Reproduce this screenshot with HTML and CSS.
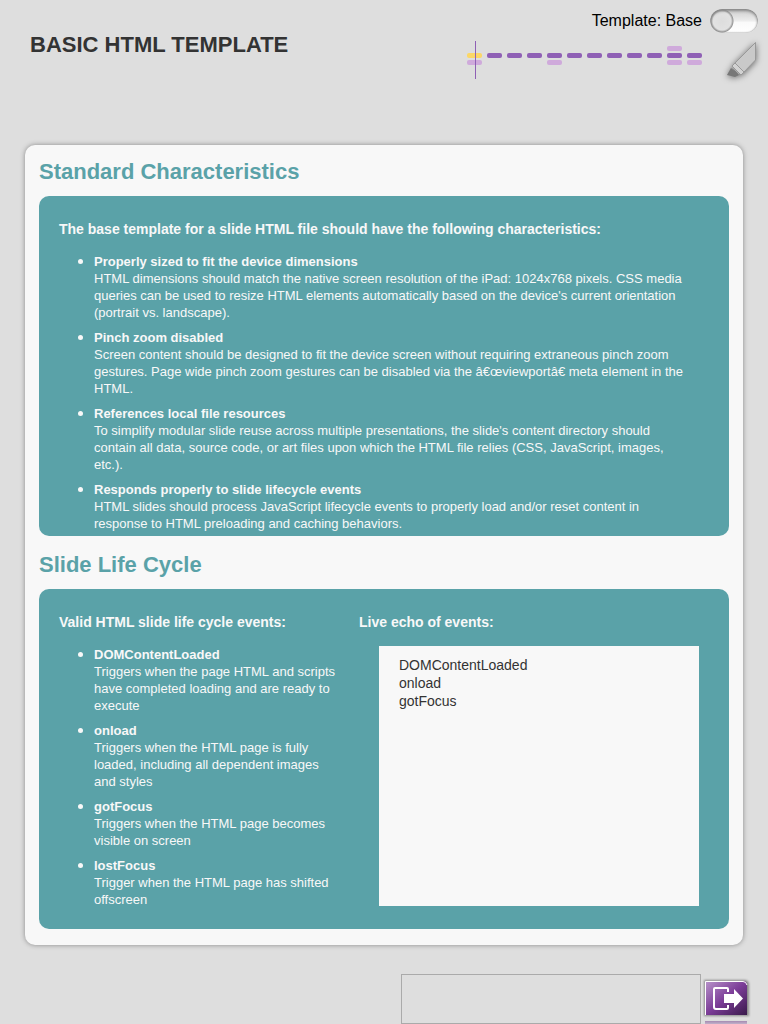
FILE: index.html
```html
<!DOCTYPE html>
<html lang="en">
<head>
<meta charset="utf-8">
<meta name="viewport" content="width=device-width, initial-scale=1">
<title>Basic HTML Template</title>
<link rel="stylesheet" href="styles.css">
</head>
<body>
<header class="header">
  <h1 class="title">BASIC HTML TEMPLATE</h1>
  <div class="tools">
    <div class="mode">
      <label for="mode">Template: Base</label>
      <input class="switch" type="checkbox" id="mode">
    </div>
    <div class="nav">
      <svg class="map" width="235" height="38" viewBox="0 0 235 38" role="img" aria-label="Slide map">
        <path stroke="#8f60b5" d="M8.500 0V38"/>
        <g fill="#8f60b5">
          <rect x="20" y="12" width="15" height="5" rx="2"/><rect x="40" y="12" width="15" height="5" rx="2"/>
          <rect x="60" y="12" width="15" height="5" rx="2"/><rect x="80" y="12" width="15" height="5" rx="2"/>
          <rect x="100" y="12" width="15" height="5" rx="2"/><rect x="120" y="12" width="15" height="5" rx="2"/>
          <rect x="140" y="12" width="15" height="5" rx="2"/><rect x="160" y="12" width="15" height="5" rx="2"/>
          <rect x="180" y="12" width="15" height="5" rx="2"/><rect x="200" y="12" width="15" height="5" rx="2"/>
          <rect x="220" y="12" width="15" height="5" rx="2"/>
        </g>
        <g fill="#cfaadb">
          <rect x="0" y="19" width="15" height="5" rx="2"/><rect x="80" y="19" width="15" height="5" rx="2"/>
          <rect x="200" y="5" width="15" height="5" rx="2"/><rect x="200" y="19" width="15" height="5" rx="2"/>
          <rect x="220" y="19" width="15" height="5" rx="2"/>
        </g>
        <rect x="0" y="12" width="15" height="5" rx="2" fill="#fcd766"/>
        <path stroke="#8f60b5" d="M8.500 11V25"/>
      </svg>
      <button class="pen" type="button" aria-label="Highlighter">
        <svg width="32" height="38" viewBox="0 0 32 38">
          <path d="M29.500 1.500V19L18 31L9 22Z" fill="#c9c9c9" stroke="#999"/>
          <path d="M9 22L18 31L15 34L6 25Z" fill="#d2d2d2" stroke="#999"/>
          <path d="M5 27L13 34L9 36L1 34Z" fill="#777"/>
          <path d="M6 26L13 33" stroke="#aaa"/>
        </svg>
      </button>
    </div>
  </div>
</header>

<main class="card">
  <h2 class="heading">Standard Characteristics</h2>
  <section class="panel">
    <div class="column">
      <h3 class="lead">The base template for a slide HTML file should have the following characteristics:</h3>
      <ul class="list">
        <li><strong>Properly sized to fit the device dimensions</strong><p>HTML dimensions should match the native screen resolution of the iPad: 1024x768 pixels. CSS media queries can be used to resize HTML elements automatically based on the device's current orientation (portrait vs. landscape).</p></li>
        <li><strong>Pinch zoom disabled</strong><p>Screen content should be designed to fit the device screen without requiring extraneous pinch zoom gestures. Page wide pinch zoom gestures can be disabled via the â€œviewportâ€ meta element in the HTML.</p></li>
        <li><strong>References local file resources</strong><p>To simplify modular slide reuse across multiple presentations, the slide's content directory should contain all data, source code, or art files upon which the HTML file relies (CSS, JavaScript, images, etc.).</p></li>
        <li><strong>Responds properly to slide lifecycle events</strong><p>HTML slides should process JavaScript lifecycle events to properly load and/or reset content in response to HTML preloading and caching behaviors.</p></li>
      </ul>
    </div>
  </section>
  <h2 class="heading">Slide Life Cycle</h2>
  <section class="panel split">
    <div class="column events">
      <h3 class="lead">Valid HTML slide life cycle events:</h3>
      <ul class="list">
        <li><strong>DOMContentLoaded</strong><p>Triggers when the page HTML and scripts have completed loading and are ready to execute</p></li>
        <li><strong>onload</strong><p>Triggers when the HTML page is fully loaded, including all dependent images and styles</p></li>
        <li><strong>gotFocus</strong><p>Triggers when the HTML page becomes visible on screen</p></li>
        <li><strong>lostFocus</strong><p>Trigger when the HTML page has shifted offscreen</p></li>
      </ul>
    </div>
    <div class="column echo">
      <h3 class="lead">Live echo of events:</h3>
      <div class="log"><p>DOMContentLoaded</p><p>onload</p><p>gotFocus</p></div>
    </div>
  </section>
</main>

<footer class="footer">
  <div class="tray"></div>
  <button class="exit" type="button" aria-label="Exit">
    <svg width="52" height="50" viewBox="0 0 52 50">
      <defs>
        <linearGradient id="violet" x1="0" y1="0" x2="1" y2="1">
          <stop offset="0" stop-color="#b995cb"/><stop offset=".5" stop-color="#7c3d98"/><stop offset="1" stop-color="#3a1a4b"/>
        </linearGradient>
        <linearGradient id="fade" x1="0" y1="0" x2="0" y2="1">
          <stop offset="0" stop-color="#a58ab2"/><stop offset="1" stop-color="#c2b2ca"/>
        </linearGradient>
      </defs>
      <path class="exit-shadow" d="M3 6H43Q48 6 48 11V42H3Z" fill="#888"/>
      <path d="M4 7H42Q46 7 46 11V41H4Z" fill="url(#violet)"/>
      <path d="M4.500 41V7.500H42Q45 7.500 46 11" fill="none" stroke="#fff"/>
      <path d="M27 18V15Q27 14 26 14H14Q13 14 13 15V33Q13 35 15 35H26Q27 35 27 34V31" fill="none" stroke="#fff" stroke-width="2"/>
      <path d="M23 20H33V15L42 24.500L33 34V29H23Z" fill="#fff"/>
      <path d="M4 47H46V50H4Z" fill="url(#fade)"/>
    </svg>
  </button>
</footer>
</body>
</html>
```
FILE: styles.css
```css
* { box-sizing: border-box; }
body {
  display: flex;
  flex-direction: column;
  min-height: 100vh;
  margin: 0;
  background: #dedede;
  color: #333;
  font-family: "Liberation Sans", Arial, sans-serif;
}
h1, h2, h3, p, ul { margin: 0; }
button { padding: 0; border: 0; background: none; }
svg { display: block; }

.header {
  display: flex;
  justify-content: space-between;
  min-height: 145px;
  padding: 9px 10px 0 30px;
}
.title { padding-top: 23px; font-size: 22px; line-height: 26px; }
.tools { display: flex; flex-direction: column; gap: 8px; }
.mode {
  display: flex;
  align-items: center;
  justify-content: flex-end;
  gap: 8px;
  color: #000;
  font-size: 16px;
}
.switch {
  appearance: none;
  display: block;
  width: 48px;
  height: 24px;
  margin: 0;
  border-radius: 12px;
  background:
    radial-gradient(circle at 12px 12px, #ddd 0, #e2e2e2 9px, #999 11px, transparent 12px),
    linear-gradient(#ccc, #eee 50%, #fafafa 55%, #fff);
  box-shadow: inset 0 2px 3px #888, inset 0 0 2px #777;
}
.nav { display: flex; gap: 24px; }
.pen { filter: drop-shadow(0 1px 3px #666); }

.card {
  margin: 0 25px;
  padding: 0 14px 16px;
  border-radius: 10px;
  background: #f8f8f8;
  box-shadow: 0 0 5px #888;
}
.heading {
  padding: 14px 0 11px;
  color: #5aa2a8;
  font-size: 22px;
  line-height: 26px;
}
.heading ~ .heading { padding-top: 16px; }
.panel {
  min-height: 340px;
  padding: 24px 40px 3px 20px;
  border-radius: 10px;
  background: #5aa2a8;
  color: #f8f8f8;
}
.lead { font-size: 14px; line-height: 18px; }
.list {
  padding: 14px 0 0 35px;
  font-size: 13px;
  line-height: 17px;
}
.list li + li { margin-top: 7px; }
.list li::marker { font-size: 16px; }
.split {
  display: grid;
  grid-template-columns: 15fr 17fr;
  padding-right: 30px;
}
.events { padding-right: 20px; }
.log {
  min-height: 260px;
  margin: 15px 0 0 20px;
  padding: 10px 20px;
  background: #f8f8f8;
  color: #333;
  font-size: 14px;
  line-height: 18px;
}

.footer {
  display: flex;
  justify-content: flex-end;
  margin-top: auto;
  padding-right: 15px;
}
.tray { width: 300px; height: 50px; border: 1px solid #aaa; }
.exit-shadow { filter: blur(1px); }
```
